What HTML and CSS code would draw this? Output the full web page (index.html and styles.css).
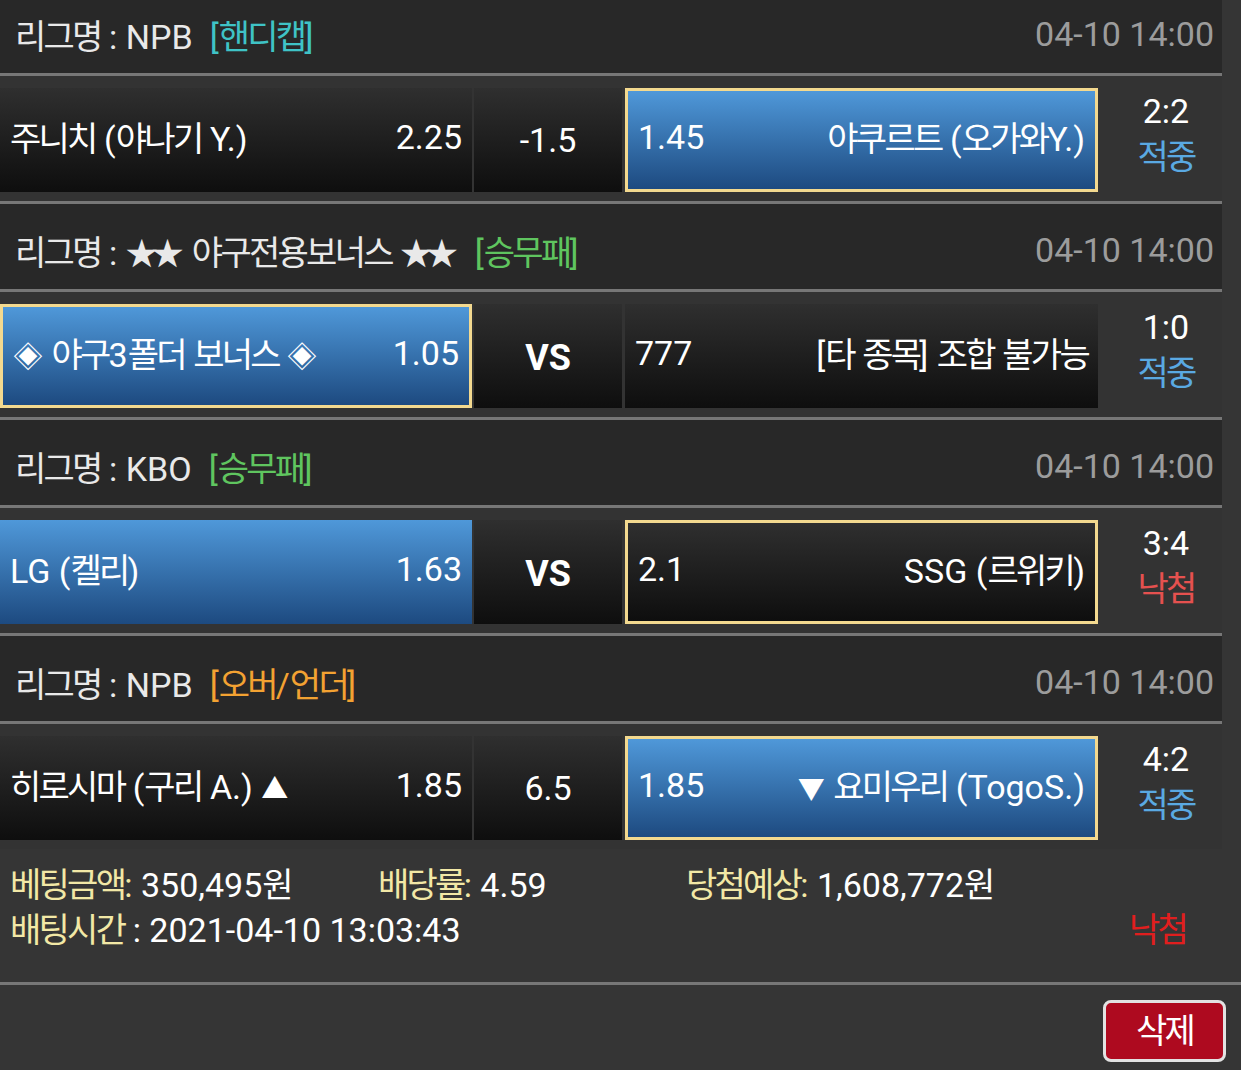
FILE: index.html
```html
<!DOCTYPE html>
<html lang="ko">
<head>
<meta charset="utf-8">
<title>베팅내역</title>
<link rel="stylesheet" href="styles.css">
</head>
<body>
<div class="list">
  <div class="league">
    <div class="league-name"><span class="ko">리그명</span> : NPB<span class="tag tag-teal">[<span class="ko">핸디캡</span>]</span></div>
    <div class="league-time">04-10 14:00</div>
  </div>
  <div class="match">
    <div class="cell home"><span class="name"><span class="ko">주니치</span> (<span class="ko">야나기</span> Y.)</span><span class="odd">2.25</span></div>
    <div class="cell mid">-1.5</div>
    <div class="cell away blue picked"><span class="odd">1.45</span><span class="name"><span class="ko">야쿠르트</span> (<span class="ko">오가와</span>Y.)</span></div>
    <div class="score"><span>2:2</span><span class="hit ko">적중</span></div>
  </div>

  <div class="league">
    <div class="league-name"><span class="ko">리그명</span> : <span class="sym">★★</span> <span class="ko">야구전용보너스</span> <span class="sym">★★</span><span class="tag tag-green">[<span class="ko">승무패</span>]</span></div>
    <div class="league-time">04-10 14:00</div>
  </div>
  <div class="match">
    <div class="cell home blue picked"><span class="name"><span class="sym diamond">◈</span> <span class="ko">야구</span>3<span class="ko">폴더</span> <span class="ko">보너스</span> <span class="sym diamond">◈</span></span><span class="odd">1.05</span></div>
    <div class="cell mid vs">VS</div>
    <div class="cell away"><span class="odd">777</span><span class="name">[<span class="ko">타</span> <span class="ko">종목</span>] <span class="ko">조합</span> <span class="ko">불가능</span></span></div>
    <div class="score"><span>1:0</span><span class="hit ko">적중</span></div>
  </div>

  <div class="league">
    <div class="league-name"><span class="ko">리그명</span> : KBO<span class="tag tag-green">[<span class="ko">승무패</span>]</span></div>
    <div class="league-time">04-10 14:00</div>
  </div>
  <div class="match">
    <div class="cell home blue"><span class="name">LG (<span class="ko">켈리</span>)</span><span class="odd">1.63</span></div>
    <div class="cell mid vs">VS</div>
    <div class="cell away picked"><span class="odd">2.1</span><span class="name">SSG (<span class="ko">르위키</span>)</span></div>
    <div class="score"><span>3:4</span><span class="miss ko">낙첨</span></div>
  </div>

  <div class="league">
    <div class="league-name"><span class="ko">리그명</span> : NPB<span class="tag tag-orange">[<span class="ko">오버</span>/<span class="ko">언더</span>]</span></div>
    <div class="league-time">04-10 14:00</div>
  </div>
  <div class="match last">
    <div class="cell home"><span class="name"><span class="ko">히로시마</span> (<span class="ko">구리</span> A.) <span class="tri">▲</span></span><span class="odd">1.85</span></div>
    <div class="cell mid">6.5</div>
    <div class="cell away blue picked"><span class="odd">1.85</span><span class="name"><span class="tri">▼</span> <span class="ko">요미우리</span> (TogoS.)</span></div>
    <div class="score"><span>4:2</span><span class="hit ko">적중</span></div>
  </div>
</div>

<div class="summary">
  <div class="summary-row">
    <div class="col col-amount"><span class="label ko">베팅금액</span><span class="label">:</span> 350,495<span class="ko">원</span></div>
    <div class="col col-rate"><span class="label ko">배당률</span><span class="label">:</span> 4.59</div>
    <div class="col"><span class="label ko">당첨예상</span><span class="label">:</span> 1,608,772<span class="ko">원</span></div>
  </div>
  <div class="summary-row between">
    <div class="col"><span class="label ko">배팅시간</span> : 2021-04-10 13:03:43</div>
    <div class="result-miss ko">낙첨</div>
  </div>
</div>

<div class="actions">
  <button class="btn-delete" type="button"><span class="ko">삭제</span></button>
</div>
</body>
</html>
```

FILE: styles.css
```css
* {
  box-sizing: border-box;
}

body {
  margin: 0;
  background: #353535;
  color: #ffffff;
  font-family: Roboto, "Noto Sans CJK KR", sans-serif;
  font-size: 34px;
  font-feature-settings: "palt";
  overflow: hidden;
}

.ko {
  letter-spacing: -0.08em;
}

.sym {
  letter-spacing: -0.2em;
  font-size: 32px;
  margin-right: 0.2em;
}

.diamond {
  font-size: 30px;
}

.tri {
  font-size: 27px;
}

.list {
  width: 1222px;
  margin-top: -12px;
}

.league {
  height: 88px;
  padding: 7px 10px 0 15px;
  background: #282828;
  border-bottom: 3px solid #777777;
  display: flex;
  align-items: center;
  justify-content: space-between;
  white-space: nowrap;
}

.league-name {
  color: #e9e9e9;
}

.tag {
  margin-left: 17px;
}

.tag-teal {
  color: #3fc3c6;
}

.tag-green {
  color: #5fc55f;
}

.tag-orange {
  color: #f3a232;
}

.league-time {
  color: #9c9c9c;
  margin-right: -2px;
}

.match {
  height: 128px;
  padding: 12px 0 9px;
  background: #333333;
  border-bottom: 3px solid #777777;
  display: flex;
  white-space: nowrap;
}

.match.last {
  border-bottom: none;
  height: 125px;
}

.cell {
  height: 104px;
  padding: 0 10px 7px;
  display: flex;
  align-items: center;
  justify-content: space-between;
  background: linear-gradient(to bottom, #2f2f2f, #0e0e0e);
}

.home {
  width: 472px;
}

.mid {
  width: 148px;
  margin-left: 2px;
  justify-content: center;
  padding: 0;
}

.vs {
  font-weight: 700;
  font-size: 36px;
  padding-top: 4px;
}

.away {
  width: 473px;
  margin-left: 3px;
}

.blue {
  background: linear-gradient(to bottom, #4f98d9, #1d4a80);
}

.picked {
  border: 3px solid #f3d98f;
}

.score {
  flex: 1;
  padding-left: 12px;
  display: flex;
  flex-direction: column;
  align-items: center;
  line-height: 46px;
}

.hit {
  color: #5aa9e2;
}

.miss {
  color: #e5514f;
}

.summary {
  padding: 14px 10px 29px;
  border-bottom: 3px solid #777777;
  line-height: 45px;
  white-space: nowrap;
}

.summary-row {
  display: flex;
}

.summary-row.between {
  justify-content: space-between;
}

.col-amount {
  width: 368px;
}

.col-rate {
  width: 308px;
}

.label {
  color: #f2e8a6;
}

.result-miss {
  color: #e11e1e;
  margin-right: 45px;
}

.actions {
  display: flex;
  justify-content: flex-end;
  padding: 15px 15px 0;
}

.btn-delete {
  width: 123px;
  height: 62px;
  background: #ae0a1f;
  border: 3px solid #e2e2e2;
  border-radius: 8px;
  color: #ffffff;
  font-family: inherit;
  font-size: 34px;
  font-feature-settings: "palt";
  padding: 0;
  line-height: 1;
}
```
